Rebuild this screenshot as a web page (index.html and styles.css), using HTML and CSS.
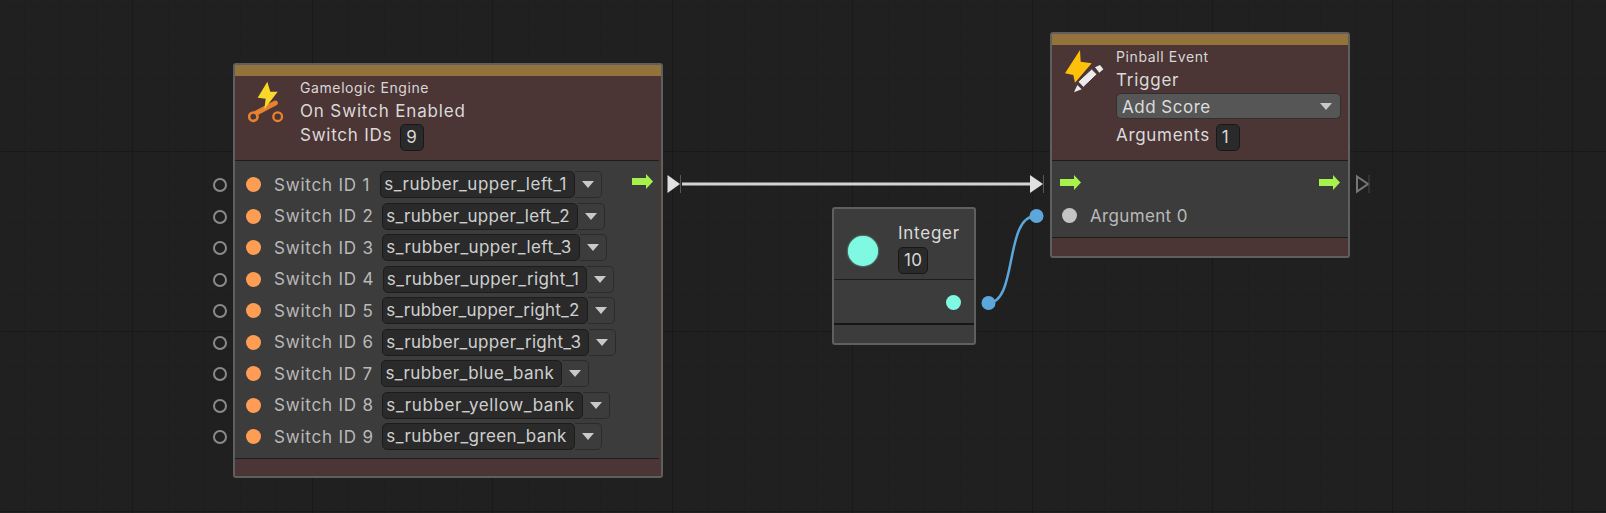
FILE: index.html
```html
<!DOCTYPE html>
<html lang="en">
<head>
<meta charset="utf-8">
<title>Pinball graph</title>
<link rel="stylesheet" href="styles.css">
</head>
<body>
<main class="canvas">
  <svg class="wires" width="1606" height="513" viewBox="0 0 1606 513">
    <path d="M667.500 175 L680 184 L667.500 193 Z" fill="#e0e0e0"/>
    <path d="M680.500 175V193" stroke="#555" stroke-width="1"/>
    <path d="M682 184H1031" stroke="#d4d4d4" stroke-width="3"/>
    <path d="M1030 175 L1043 184 L1030 193 Z" fill="#e0e0e0"/>
    <path d="M1043.500 175V193" stroke="#555" stroke-width="1"/>
    <path d="M1357 176.500 L1368 184 L1357 191.500 Z" fill="none" stroke="#777" stroke-width="2"/>
    <path d="M1369 175V193" stroke="#444" stroke-width="1"/>
    <path d="M988 303 C1018 303 1004 216 1036 216" fill="none" stroke="#5ba7dc" stroke-width="2.500"/>
    <circle cx="988.500" cy="303" r="7" fill="#5ba7dc"/>
    <circle cx="1036.500" cy="216" r="7" fill="#5ba7dc"/>
  </svg>

  <section class="node node-engine">
    <div class="bar"></div>
    <header class="head head-engine">
      <svg class="logo logo-engine" width="44" height="44" viewBox="33 60 132 132">
        <path d="M64 159L121 129" stroke="#e8822e" stroke-width="15" stroke-linecap="round"/>
        <circle cx="55" cy="170" r="12.500" fill="#4c3535" stroke="#e8822e" stroke-width="8"/>
        <circle cx="128" cy="170" r="13" fill="#4c3535" stroke="#e8822e" stroke-width="7"/>
        <path d="M97 65L68 113L92 116L88 148L128 95L106 95Z" fill="#f8d829"/>
      </svg>
      <div class="titles">
        <div class="kicker">Gamelogic Engine</div>
        <div class="title">On Switch Enabled</div>
        <div class="line">Switch IDs <span class="num">9</span></div>
      </div>
    </header>
    <div class="body body-engine">
      <div class="row"><i class="ring"></i><i class="dot orange"></i><span class="label">Switch ID 1</span><span class="pick">s_rubber_upper_left_1</span><span class="caret"><i></i></span>
        <svg class="flow flow-out" width="21" height="15" viewBox="0 0 21 15"><path d="M0 4H14V0L21 7.500L14 15V11H0Z" fill="#a6f14c"/></svg></div>
      <div class="row"><i class="ring"></i><i class="dot orange"></i><span class="label">Switch ID 2</span><span class="pick pick-narrow">s_rubber_upper_left_2</span><span class="caret"><i></i></span></div>
      <div class="row"><i class="ring"></i><i class="dot orange"></i><span class="label">Switch ID 3</span><span class="pick pick-mid">s_rubber_upper_left_3</span><span class="caret"><i></i></span></div>
      <div class="row"><i class="ring"></i><i class="dot orange"></i><span class="label">Switch ID 4</span><span class="pick pick-mid">s_rubber_upper_right_1</span><span class="caret"><i></i></span></div>
      <div class="row"><i class="ring"></i><i class="dot orange"></i><span class="label">Switch ID 5</span><span class="pick pick-tight">s_rubber_upper_right_2</span><span class="caret"><i></i></span></div>
      <div class="row"><i class="ring"></i><i class="dot orange"></i><span class="label">Switch ID 6</span><span class="pick pick-narrow">s_rubber_upper_right_3</span><span class="caret"><i></i></span></div>
      <div class="row"><i class="ring"></i><i class="dot orange"></i><span class="label">Switch ID 7</span><span class="pick pick-mid">s_rubber_blue_bank</span><span class="caret"><i></i></span></div>
      <div class="row"><i class="ring"></i><i class="dot orange"></i><span class="label">Switch ID 8</span><span class="pick pick-wide">s_rubber_yellow_bank</span><span class="caret"><i></i></span></div>
      <div class="row"><i class="ring"></i><i class="dot orange"></i><span class="label">Switch ID 9</span><span class="pick pick-mid">s_rubber_green_bank</span><span class="caret"><i></i></span></div>
    </div>
    <div class="foot"></div>
  </section>

  <section class="node node-integer">
    <div class="int-head">
      <i class="big-dot"></i>
      <div class="int-info">
        <div class="int-title">Integer</div>
        <span class="num">10</span>
      </div>
    </div>
    <div class="int-body"><i class="dot teal"></i></div>
    <div class="int-foot"></div>
  </section>

  <section class="node node-event">
    <div class="bar"></div>
    <header class="head head-event">
      <svg class="logo logo-event" width="44" height="48" viewBox="39 45 132 144">
        <path d="M90 45L45 115L70 120L75 143L125 85L92 80Z" fill="#fdc00b"/>
        <path d="M84 140L125 102L141 118L100 157Z" fill="#ececec" stroke="#4c3535" stroke-width="3"/>
        <path d="M135 97L150 90L160 103L148 113Z" fill="#ececec"/>
        <path d="M82 150L95 163L72 172Z" fill="#ececec"/>
      </svg>
      <div class="titles titles-event">
        <div class="kicker">Pinball Event</div>
        <div class="line line-trigger">Trigger</div>
        <div class="select"><span>Add Score</span><i class="tri"></i></div>
        <div class="line line-args">Arguments <span class="num">1</span></div>
      </div>
    </header>
    <div class="body body-event">
      <div class="flow-row">
        <svg width="21" height="15" viewBox="0 0 21 15"><path d="M0 4H14V0L21 7.500L14 15V11H0Z" fill="#a6f14c"/></svg>
        <svg width="21" height="15" viewBox="0 0 21 15"><path d="M0 4H14V0L21 7.500L14 15V11H0Z" fill="#a6f14c"/></svg>
      </div>
      <div class="arg-row"><i class="dot gray"></i><span class="label">Argument 0</span></div>
    </div>
    <div class="foot"></div>
  </section>
</main>
</body>
</html>
```
FILE: styles.css
```css
* { box-sizing: border-box; }
html, body { margin: 0; padding: 0; }
body { width: 1606px; height: 513px; overflow: hidden; background: #202020; font-family: Inter, "Liberation Sans", sans-serif; }
i { display: block; font-style: normal; }

.canvas {
  position: relative;
  width: 1606px;
  height: 513px;
  overflow: hidden;
  background-color: #202020;
  background-image:
    linear-gradient(to right, #191919 1px, transparent 1px),
    linear-gradient(to bottom, #191919 1px, transparent 1px),
    linear-gradient(to right, #1e1e1e 1px, transparent 1px),
    linear-gradient(to bottom, #1e1e1e 1px, transparent 1px);
  background-size: 180px 180px, 180px 180px, 18px 18px, 18px 18px;
  background-position: 132px 0, 0 151px, 6px 0, 0 7px;
}
.wires { position: absolute; left: 0; top: 0; }

.node {
  position: absolute;
  display: flex;
  flex-direction: column;
  border: 2px solid #5f5f5f;
  border-radius: 3px;
  background: #3c3c3c;
}
.node-engine { left: 233px; top: 63px; width: 430px; height: 415px; background: #4c3535; }
.node-integer { left: 832px; top: 207px; width: 144px; height: 138px; }
.node-event { left: 1050px; top: 32px; width: 300px; height: 226px; }

.bar { height: 11px; flex: none; background: #94723b; }
.head { display: flex; flex: none; background: #4c3535; }
.head-engine { height: 84px; }
.head-event { height: 115px; }
.logo { flex: none; margin: 5px 0 0 11px; }
.logo-engine { margin-top: 4px; }
.titles { margin-left: 10px; padding-top: 2px; color: #dadada; }
.titles-event { flex: 1; margin-left: 9px; padding-right: 7px; }
.kicker { font-size: 14px; line-height: 19px; color: #d8d8d8; letter-spacing: .6px; }
.title, .line { font-size: 17px; line-height: 24px; color: #dadada; letter-spacing: .75px; }
.title { margin-top: 2px; letter-spacing: .85px; }
.line { display: flex; align-items: flex-start; gap: 8px; }
.line-trigger { margin-top: 2px; }
.line-args { letter-spacing: .7px; gap: 6px; }
.num {
  display: inline-block;
  min-width: 24px;
  height: 27px;
  margin-top: 1px;
  padding: 0 5px;
  border: 1px solid #181818;
  border-radius: 5px;
  background: #2a2a2a;
  color: #d8d8d8;
  font-size: 17px;
  line-height: 25px;
  letter-spacing: .3px;
}

.select {
  display: flex;
  align-items: center;
  justify-content: space-between;
  height: 26px;
  margin: 1px 0 4px;
  padding: 1px 8px 0 5px;
  border: 1px solid #303030;
  border-radius: 5px;
  background: #565656;
  color: #dcdcdc;
  font-size: 17px;
  letter-spacing: .5px;
}
.tri, .caret i { width: 0; height: 0; border-left: 6px solid transparent; border-right: 6px solid transparent; border-top: 7px solid #c9c9c9; }

.body { flex: 1; background: #3c3c3c; border-top: 1px solid #1d1d1d; border-bottom: 1px solid #1d1d1d; }
.body-engine { margin-right: 2px; padding-top: 8px; }
.foot { height: 18px; flex: none; background: #4c3535; }
.node-engine .foot { height: 17px; }

.row { position: relative; display: flex; align-items: center; height: 31.500px; padding-left: 11px; }
.dot { flex: none; width: 15px; height: 15px; border-radius: 50%; }
.orange { background: #ff9d55; }
.gray { background: #c4c4c4; }
.teal { background: #7ff9e1; }
.ring {
  position: absolute;
  left: -22px;
  top: 9px;
  width: 14px;
  height: 14px;
  border: 2px solid #8a8a8a;
  border-radius: 50%;
}
.label { flex: none; margin: 0 8.500px 0 13px; font-size: 17px; color: #b9b9b9; letter-spacing: .8px; white-space: nowrap; }
.row:first-child .label { margin-right: 10px; }
.pick {
  flex: none;
  height: 27px;
  padding: 0 7px 0 3px;
  border: 1px solid #1c1c1c;
  border-radius: 5px;
  background: #2a2a2a;
  color: #cfcfcf;
  font-size: 17px;
  line-height: 25px;
  letter-spacing: .5px;
  white-space: nowrap;
}
.pick-wide { letter-spacing: .6px; }
.pick-mid { letter-spacing: .4px; }
.pick-narrow { letter-spacing: .3px; }
.pick-tight { letter-spacing: .2px; }
.caret {
  display: flex;
  flex: none;
  align-items: center;
  justify-content: center;
  width: 27px;
  height: 27px;
  border: 1px solid #2b2b2b;
  border-left: 0;
  border-radius: 0 5px 5px 0;
}
.flow-out { position: absolute; left: 397px; top: 5px; }

.body-event { padding: 0 8px; }
.flow-row { display: flex; justify-content: space-between; align-items: center; height: 42px; }
.arg-row { display: flex; align-items: center; height: 25px; padding-left: 2px; }
.arg-row .label { margin-left: 13px; letter-spacing: .35px; }

.int-head { display: flex; height: 71px; flex: none; border-bottom: 1px solid #1d1d1d; }
.big-dot { flex: none; width: 30px; height: 30px; margin: 27px 0 0 14px; border-radius: 50%; background: #7ff9e1; box-shadow: 0 0 2px #7ff9e1; }
.int-info { margin-left: 20px; padding-top: 12px; }
.int-title { font-size: 17px; line-height: 25px; color: #dadada; letter-spacing: .75px; }
.int-body { display: flex; flex: none; align-items: center; justify-content: flex-end; height: 45px; padding: 2px 13px 0 0; border-bottom: 2px solid #161616; }
.int-foot { flex: 1; }
```
